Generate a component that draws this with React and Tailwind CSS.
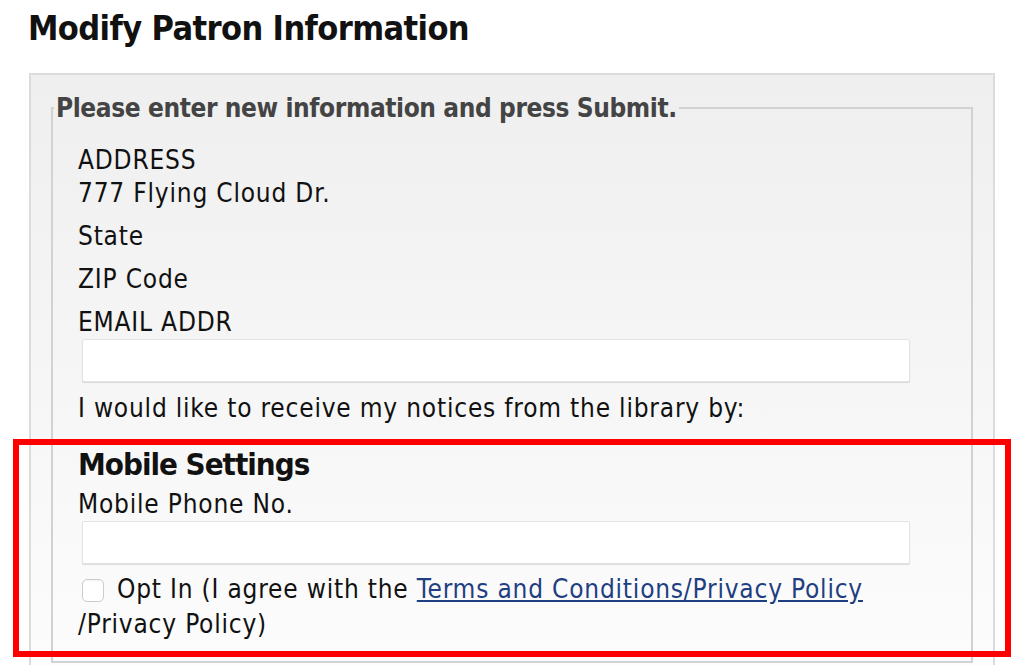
import React from 'react';

const font = "font-['DejaVu_Sans_Condensed','DejaVu_Sans',sans-serif]";

const Field = ({ label }) => (
    <div className="mt-[10px] first:mt-0">{label}</div>
);

const TextBox = () => (
    <input
        type="text"
        className="block ml-[4px] w-[828px] h-[43px] bg-white border border-[#e3e3e3] rounded-[2px] shadow-[0_1px_1px_rgba(0,0,0,0.12)] outline-none"
    />
);

const App = () => {
    return (
        <div className={`relative min-h-screen bg-white text-[#111] ${font}`}>
            <div className="pl-[28px] pr-[29px] pt-[8px]">
                <h1 className="text-[34px] leading-[40px] font-bold tracking-[-0.6px]">Modify Patron Information</h1>

                <div className="mt-[25px] ml-[1px] w-[966px] border-2 border-[#dcdcdc] bg-gradient-to-b from-[#efefef] to-[#fdfdfd] px-[20px] pt-[18px] pb-[40px]">
                    <fieldset className="border-2 border-[#d2d2d2] px-0 pb-[20px]">
                        <legend className="ml-[1px] px-[2px] text-[26px] leading-[30px] font-bold text-[#444] tracking-[-0.4px]">
                            Please enter new information and press Submit.
                        </legend>

                        <div className="pl-[25px] pr-[20px] pt-[21px] text-[26px] leading-[33px] tracking-[0.8px]">
                            <div>
                                ADDRESS
                                <br />
                                777 Flying Cloud Dr.
                            </div>
                            <Field label="State" />
                            <Field label="ZIP Code" />
                            <Field label="EMAIL ADDR" />
                            <TextBox />
                            <div className="mt-[10px]">I would like to receive my notices from the library by:</div>

                            <h3 className="mt-[21px] text-[31px] leading-[36px] font-bold tracking-[-1px]">Mobile Settings</h3>
                            <div className="mt-[6px]">Mobile Phone No.</div>
                            <TextBox />
                            <div className="mt-[9px] flex items-start">
                                <input
                                    type="checkbox"
                                    className="appearance-none shrink-0 ml-[4px] mt-[6px] w-[22px] h-[23px] bg-white border border-[#cccccc] rounded-[5px] shadow-[inset_0_1px_1px_rgba(0,0,0,0.05)]"
                                />
                                <span className="ml-[13px]">
                                    Opt In (I agree with the{' '}
                                    <a href="#" className="text-[#1f3f82] underline">Terms and Conditions/Privacy Policy</a>
                                </span>
                            </div>
                            <div className="mt-[2px]">/Privacy Policy)</div>
                        </div>
                    </fieldset>
                </div>
            </div>

            {/* highlight frame drawn over the mobile section */}
            <div className="absolute left-[13px] top-[439px] w-[998px] h-[218px] border-[6px] border-[#ff0000] pointer-events-none" />
        </div>
    );
};

export default App;
